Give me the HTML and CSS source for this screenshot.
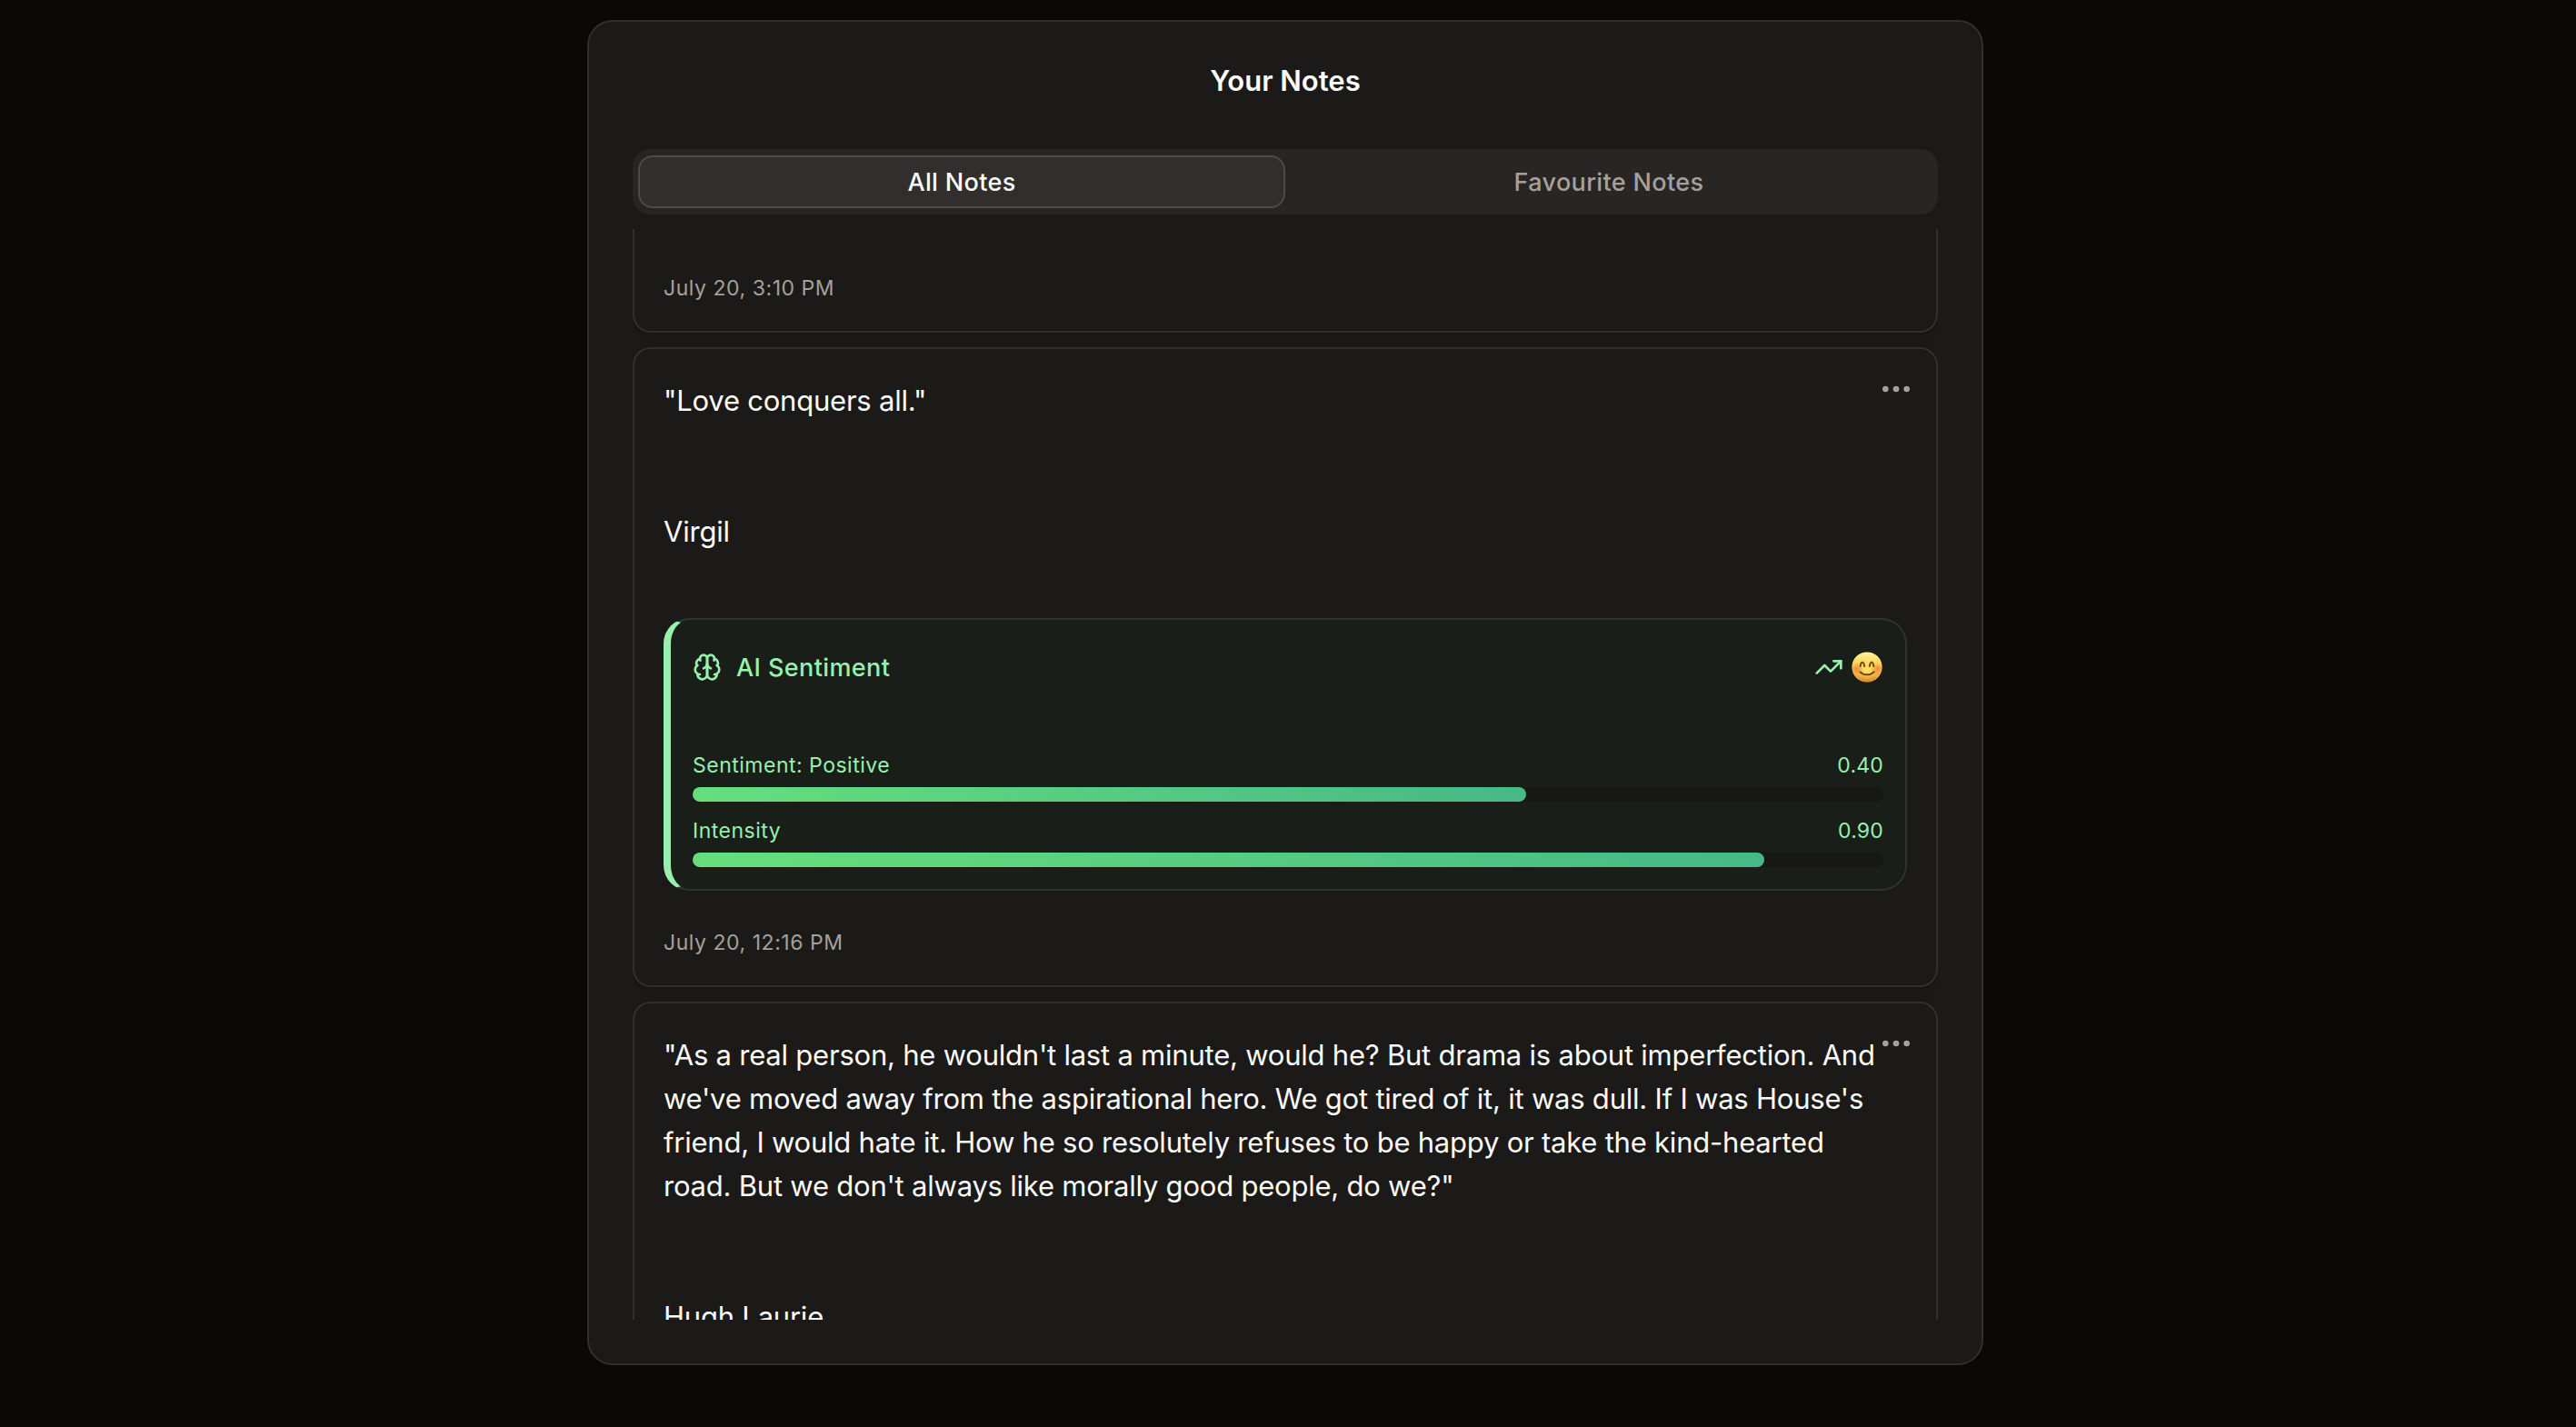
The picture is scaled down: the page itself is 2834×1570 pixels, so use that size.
FILE: index.html
```html
<!DOCTYPE html>
<html lang="en">
  <head>
    <meta charset="UTF-8" />
    <meta name="viewport" content="width=device-width, initial-scale=1.0" />
    <title>Your Notes</title>
    <link rel="stylesheet" href="styles.css">
  </head>
  <body>
    <main class="panel">
      <h1 class="panel-title">Your Notes</h1>

      <div class="tabs">
        <button class="tab is-active" type="button">All Notes</button>
        <button class="tab" type="button">Favourite Notes</button>
      </div>

      <section class="notes">
        <article class="note note-scrolled">
          <p class="note-date">July 20, 3:10 PM</p>
        </article>

        <article class="note">
          <button class="note-menu" type="button" aria-label="Options">
            <svg viewBox="0 0 24 24" class="icon">
              <circle cx="12" cy="12" r="1" />
              <circle cx="19" cy="12" r="1" />
              <circle cx="5" cy="12" r="1" />
            </svg>
          </button>
          <div class="note-text">
            <p>"Love conquers all."</p>
            <p>Virgil</p>
          </div>

          <div class="sentiment">
            <div class="sentiment-header">
              <svg viewBox="0 0 24 24" class="icon">
                <path d="M12 5a3 3 0 1 0-5.997.125 4 4 0 0 0-2.526 5.77 4 4 0 0 0 .556 6.588A4 4 0 1 0 12 18Z" />
                <path d="M12 5a3 3 0 1 1 5.997.125 4 4 0 0 1 2.526 5.77 4 4 0 0 1-.556 6.588A4 4 0 1 1 12 18Z" />
                <path d="M15 13a4.5 4.5 0 0 1-3-4 4.5 4.5 0 0 1-3 4" />
                <path d="M17.599 6.5a3 3 0 0 0 .399-1.375" />
                <path d="M6.003 5.125A3 3 0 0 0 6.401 6.5" />
                <path d="M3.477 10.896a4 4 0 0 1 .585-.396" />
                <path d="M19.938 10.5a4 4 0 0 1 .585.396" />
                <path d="M6 18a4 4 0 0 1-1.967-.516" />
                <path d="M19.967 17.484A4 4 0 0 1 18 18" />
              </svg>
              <h2 class="sentiment-title">AI Sentiment</h2>
              <div class="sentiment-mood">
                <svg viewBox="0 0 24 24" class="icon">
                  <path d="M22 7l-8.5 8.5-5-5L2 17" />
                  <path d="M16 7h6v6" />
                </svg>
                <svg viewBox="0 0 34 34" class="emoji">
                  <defs>
                    <linearGradient id="face" x1="0" y1="0" x2="0" y2="1">
                      <stop offset="0" stop-color="#fff3a0" />
                      <stop offset="0.3" stop-color="#fbdc62" />
                      <stop offset="0.7" stop-color="#f5bb4c" />
                      <stop offset="1" stop-color="#d98428" />
                    </linearGradient>
                    <radialGradient id="cheek">
                      <stop offset="0" stop-color="#f0803c" stop-opacity="0.85" />
                      <stop offset="1" stop-color="#f0803c" stop-opacity="0" />
                    </radialGradient>
                    <radialGradient id="glow">
                      <stop offset="0" stop-color="#fbe268" />
                      <stop offset="1" stop-color="#fbe268" stop-opacity="0" />
                    </radialGradient>
                    <clipPath id="round"><circle cx="17" cy="17" r="16.8" /></clipPath>
                  </defs>
                  <g clip-path="url(#round)">
                    <circle cx="17" cy="17" r="16.8" fill="url(#face)" />
                    <circle cx="17" cy="20" r="11" fill="url(#glow)" />
                    <circle cx="5.5" cy="19" r="7" fill="url(#cheek)" />
                    <circle cx="28.5" cy="19" r="7" fill="url(#cheek)" />
                  </g>
                  <path class="emoji-line" d="M9.6 16c.5-2.9 1.2-4.2 2.3-4.2s1.8 1.3 2.3 4.200M19.800 16c.5-2.900 1.200-4.200 2.300-4.200s1.800 1.300 2.300 4.200M9.300 22.200c4 4.200 11.400 4.200 15.400 0" />
                </svg>
              </div>
            </div>

            <div class="meter">
              <div class="meter-label">
                <span>Sentiment: Positive</span>
                <span class="meter-value">0.40</span>
              </div>
              <div class="meter-track">
                <div class="meter-fill" style="width: 70%"></div>
              </div>
            </div>
            <div class="meter">
              <div class="meter-label">
                <span>Intensity</span>
                <span class="meter-value">0.90</span>
              </div>
              <div class="meter-track">
                <div class="meter-fill" style="width: 90%"></div>
              </div>
            </div>
          </div>

          <p class="note-date">July 20, 12:16 PM</p>
        </article>

        <article class="note">
          <button class="note-menu" type="button" aria-label="Options">
            <svg viewBox="0 0 24 24" class="icon">
              <circle cx="12" cy="12" r="1" />
              <circle cx="19" cy="12" r="1" />
              <circle cx="5" cy="12" r="1" />
            </svg>
          </button>
          <div class="note-text">
            <p>
              "As a real person, he wouldn't last a minute, would he? But drama is about imperfection. And
              <br />we've moved away from the aspirational hero. We got tired of it, it was dull. If I was House's
              <br />friend, I would hate it. How he so resolutely refuses to be happy or take the kind-hearted
              <br />road. But we don't always like morally good people, do we?"
            </p>
            <p>Hugh Laurie</p>
          </div>
        </article>
      </section>
    </main>
  </body>
</html>
```

FILE: styles.css
```css
html {
  box-sizing: border-box;
}

*,
*:before,
*:after {
  box-sizing: inherit;
}

body {
  --border: #30302e;
  --text: #fafaf9;
  --muted: #a6a09b;
  --green: #97f0ae;
  margin: 0;
  height: 100vh;
  padding-top: 22px;
  padding-right: 6px;
  overflow: hidden;
  background-color: #0a0907;
  color: var(--text);
  font-family: Inter, sans-serif;
}

h1,
h2,
p {
  margin: 0;
}

button {
  border: none;
  background: none;
  font-family: inherit;
}

.icon {
  display: block;
  width: 32px;
  height: 32px;
  fill: none;
  stroke: currentColor;
  stroke-width: 2;
  stroke-linecap: round;
  stroke-linejoin: round;
}

/* Panel */
.panel {
  display: flex;
  flex-direction: column;
  width: 1536px;
  height: 1480px;
  margin: 0 auto;
  padding: 45px 48px 48px;
  border: 2px solid var(--border);
  border-radius: 28px;
  background-color: #1b1a18;
}

.panel-title {
  margin-bottom: 55px;
  font-size: 31px;
  font-weight: 600;
  line-height: 40px;
  text-align: center;
}

/* Tabs */
.tabs {
  display: flex;
  flex-shrink: 0;
  height: 72px;
  margin-bottom: 16px;
  padding: 7px 6px;
  border-radius: 20px;
  background-color: #292524;
}

.tab {
  flex: 1;
  padding: 0;
  border: 2px solid transparent;
  border-radius: 16px;
  color: var(--muted);
  font-size: 27px;
  font-weight: 450;
  letter-spacing: 0.36px;
}

.tab.is-active {
  border-color: #4d4b4a;
  background-color: #322e2d;
  color: var(--text);
}

/* Notes */
.notes {
  display: flex;
  flex: 1;
  flex-direction: column;
  gap: 16px;
  min-height: 0;
  overflow: hidden;
}

.note {
  position: relative;
  flex-shrink: 0;
  padding: 33px 32px 31px;
  border: 2px solid var(--border);
  border-radius: 20px;
  background-color: #1b1a18;
  box-shadow: 0 2px 6px rgba(0, 0, 0, 0.2);
}

.note:last-child {
  min-height: 704px;
}

/* the part of the card left after scrolling */
.note-scrolled {
  padding-top: 49px;
  border-top: none;
  border-radius: 0 0 20px 20px;
}

.note-menu {
  position: absolute;
  top: 24px;
  right: 24px;
  padding: 0;
  color: var(--muted);
}

.note-menu .icon {
  width: 40px;
  height: 40px;
}

.note-text {
  display: flex;
  flex-direction: column;
  gap: 96px;
  font-size: 31px;
  line-height: 48px;
  letter-spacing: -0.22px;
  white-space: nowrap;
}

.note-date {
  color: var(--muted);
  font-size: 23px;
  line-height: 32px;
  letter-spacing: 0.54px;
}

/* AI sentiment */
.sentiment {
  margin: 71px 0 41px;
  padding: 22px 24px 24px;
  border: 2px solid #2f332e;
  border-left: 8px solid var(--green);
  border-radius: 28px;
  background-color: #1a1e19;
  color: var(--green);
}

.sentiment-header {
  display: flex;
  align-items: center;
  gap: 16px;
  height: 60px;
  margin-bottom: 62px;
}

.sentiment-title {
  font-size: 27px;
  font-weight: 450;
  letter-spacing: 0.4px;
}

.sentiment-mood {
  display: flex;
  align-items: center;
  gap: 9px;
  margin-right: 1px;
  margin-left: auto;
}

.sentiment-mood .icon {
  width: 32px;
}

.emoji {
  display: block;
  width: 34px;
  height: 34px;
}

.emoji-line {
  fill: none;
  stroke: #7a4a12;
  stroke-width: 2;
  stroke-linecap: round;
}

.meter + .meter {
  margin-top: 16px;
}

.meter-label {
  display: flex;
  justify-content: space-between;
  margin-bottom: 7px;
  font-size: 23px;
  line-height: 33px;
  letter-spacing: 0.5px;
}

.meter-value {
  letter-spacing: 0.2px;
}

.meter-track {
  height: 16px;
  border-radius: 8px;
  background-color: #171814;
}

.meter-fill {
  height: 100%;
  border-radius: 8px;
  background-image: linear-gradient(to right, #67de7b, #46b987);
}
```
